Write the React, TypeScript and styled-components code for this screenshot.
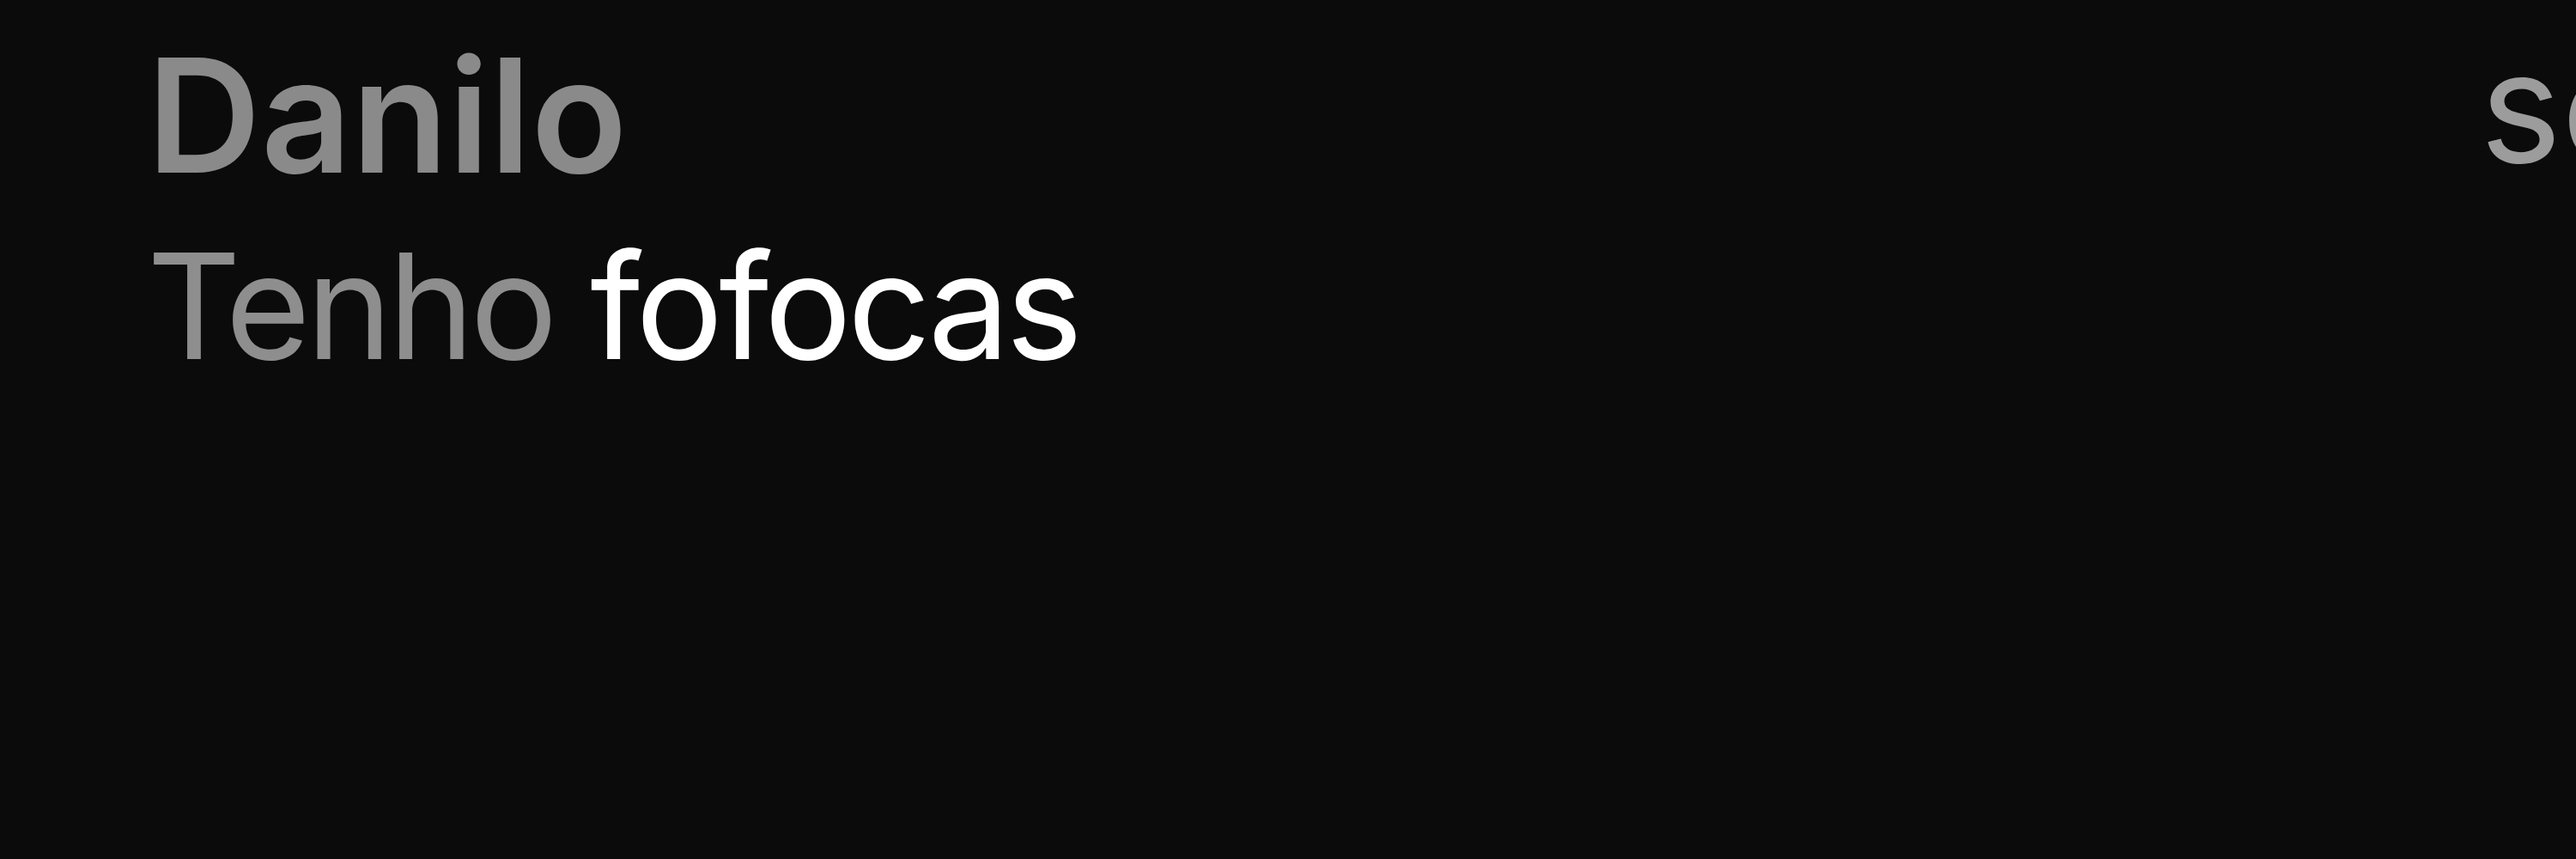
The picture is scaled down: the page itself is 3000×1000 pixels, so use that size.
import styled, {createGlobalStyle} from "styled-components";

const GlobalStyle = createGlobalStyle`
    html, body {
        margin: 0;
        padding: 0;
        background-color: #0b0b0b;
        overflow: hidden;
    }
    body {
        font-family: 'Inter', 'Roboto', sans-serif;
    }
`

interface Chat {
    name: string;
    time: string;
    sender: string;
    text: string;
}

const chat: Chat = {
    name: "Danilo",
    time: "sex",
    sender: "Tenho",
    text: "fofocas",
};

function App() {
    return (
        <Page>
            <GlobalStyle/>
            <ChatRow>
                <Header>
                    <Name>{chat.name}</Name>
                    <Time>{chat.time}</Time>
                </Header>
                <Preview>
                    <Sender>{chat.sender}</Sender> <Message>{chat.text}</Message>
                </Preview>
            </ChatRow>
        </Page>
    )
}

const Page = styled.div`
    width: 3000px;
    height: 1000px;
    background-color: #0b0b0b;
    overflow: hidden;
`

const ChatRow = styled.div`
    display: flex;
    flex-direction: column;
    padding: 42px 0px 0px 171px;
`

const Header = styled.div`
    display: flex;
    align-items: flex-start;
    justify-content: space-between;
`

const Name = styled.div`
    font-size: 184px;
    line-height: 184px;
    font-weight: 600;
    color: #8a8a8a;
`

const Time = styled.div`
    width: 112px;
    margin-top: -8px;
    font-size: 180px;
    line-height: 180px;
    color: #9c9c9c;
    white-space: nowrap;
`

const Preview = styled.div`
    margin-top: 45px;
    font-size: 170px;
    line-height: 170px;
    white-space: nowrap;
    letter-spacing: -5px;
`

const Sender = styled.span`
    color: #8e8e8e;
`

const Message = styled.span`
    color: #ffffff;
`

export default App;
